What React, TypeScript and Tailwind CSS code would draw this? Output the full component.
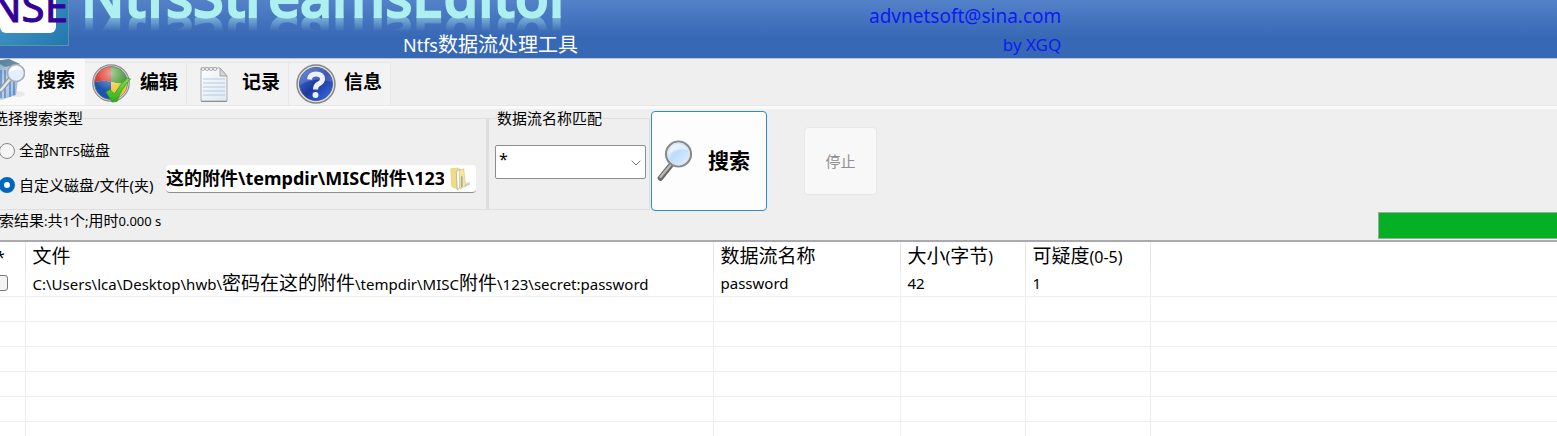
import { ChevronDown } from "lucide-react";
import type { ReactNode } from "react";

const CJK = /([\u4e00-\u9fff]+)/;

/** Sets Chinese runs one step larger than the Latin text around them. */
function Mixed({ text, cjk }: { text: string; cjk: string }) {
  return (
    <>
      {text.split(CJK).map((part, i) =>
        CJK.test(part) ? (
          <span key={i} className={cjk}>
            {part}
          </span>
        ) : (
          part
        ),
      )}
    </>
  );
}

function BinIcon() {
  return (
    <svg viewBox="0 0 40 44" className="h-11 w-10 shrink-0" aria-hidden="true">
      <defs>
        <linearGradient id="bin" x1="0" y1="0" x2="1" y2="1">
          <stop offset="0" stopColor="#5e8fa8" />
          <stop offset="0.5" stopColor="#b9d3e6" />
          <stop offset="1" stopColor="#6f9bd1" />
        </linearGradient>
      </defs>
      <ellipse cx="33" cy="36" rx="7" ry="3" fill="#e9e9e9" />
      <path d="M10 3 L24 1 L35 6 L31 37 L16 42 L12 38 Z" fill="url(#bin)" opacity="0.85" />
      <path d="M10 3 L24 1 L35 6 L20 9 Z" fill="#47708c" opacity="0.7" />
      <path d="M16 12v28M20 12v28M25 24v15M29 24v13" stroke="#4d78bd" strokeWidth="1.6" opacity="0.75" />
      <path d="M26 20 L16 32" stroke="#8d98a6" strokeWidth="5" strokeLinecap="round" />
      <path d="M26 20 L16 32" stroke="#e2e7ec" strokeWidth="2.5" strokeLinecap="round" />
      <circle cx="31" cy="15" r="8.5" fill="#e3effa" stroke="#a3abb4" strokeWidth="1.6" />
      <path d="M24 14a7 7 0 0 1 13-2c-4-1-8 0-13 2z" fill="#fff" />
    </svg>
  );
}

function ShieldIcon() {
  return (
    <svg viewBox="0 0 40 40" className="size-10 shrink-0" aria-hidden="true">
      <defs>
        <clipPath id="disc">
          <circle cx="19" cy="19" r="16.5" />
        </clipPath>
        <radialGradient id="shine" cx="0.5" cy="0.2" r="0.8">
          <stop offset="0" stopColor="#fff" stopOpacity="0.55" />
          <stop offset="0.7" stopColor="#fff" stopOpacity="0" />
        </radialGradient>
        <linearGradient id="tick" x1="0" y1="0" x2="0" y2="1">
          <stop offset="0" stopColor="#7ee04a" />
          <stop offset="1" stopColor="#2fae1e" />
        </linearGradient>
      </defs>
      <circle cx="19" cy="19" r="18.2" fill="#e4e4e4" stroke="#8b8b8b" strokeWidth="1.2" />
      <g clipPath="url(#disc)">
        <path d="M0 0H19V18Q10 15 0 19Z" fill="#df2a1b" />
        <path d="M19 0H40V19Q29 21 19 18Z" fill="#3c9428" />
        <path d="M0 19Q10 15 19 18V40H0Z" fill="#1c55ad" />
        <path d="M19 18Q29 21 40 19V40H19Z" fill="#f3c640" />
      </g>
      <circle cx="19" cy="19" r="16.5" fill="url(#shine)" stroke="#777" strokeWidth="0.8" />
      <path
        d="M14 28 L18 25.500 L22.500 30 Q28 20 35.500 14 L38.500 15 Q29 25 25 37.500 L20 38 Z"
        fill="url(#tick)"
        stroke="#3a9a24"
        strokeWidth="0.8"
      />
    </svg>
  );
}

function NotepadIcon() {
  return (
    <svg viewBox="0 0 40 40" className="size-10 shrink-0" aria-hidden="true">
      <defs>
        <linearGradient id="page" x1="0" y1="0" x2="1" y2="1">
          <stop offset="0" stopColor="#fdfdfd" />
          <stop offset="1" stopColor="#dfe8f0" />
        </linearGradient>
      </defs>
      <path d="M7 4H26L33 12V37H7Z" fill="url(#page)" stroke="#aab0b6" strokeWidth="1" />
      <path d="M26 4V12H33Z" fill="#d5d5d5" stroke="#999" strokeWidth="0.8" />
      <path d="M9 15H31M9 19H31M9 23H31M9 27H31M9 31H31" stroke="#b3cbe2" strokeWidth="1" />
      <path d="M7 37.500H33" stroke="#8b9096" strokeWidth="1" />
      {[9, 13, 17, 21].map((x) => (
        <circle key={x} cx={x} cy="5" r="1.6" fill="#f6f6f6" stroke="#9b9b9b" strokeWidth="0.8" />
      ))}
    </svg>
  );
}

function HelpIcon() {
  return (
    <svg viewBox="0 0 40 40" className="size-10 shrink-0" aria-hidden="true">
      <defs>
        <linearGradient id="orb" x1="0" y1="0" x2="1" y2="1">
          <stop offset="0" stopColor="#4a7be0" />
          <stop offset="0.5" stopColor="#1b3a9c" />
          <stop offset="1" stopColor="#3f6cf0" />
        </linearGradient>
      </defs>
      <circle cx="20" cy="20" r="19" fill="#dcdcdc" stroke="#858585" strokeWidth="1.4" />
      <circle cx="20" cy="20" r="16.5" fill="url(#orb)" stroke="#32508f" strokeWidth="0.8" />
      <path d="M4 21a16 16 0 0 1 32-3c-8-3-21-4-32 3z" fill="#fff" opacity="0.16" />
      <path
        d="M13.500 15.500Q14 10 20 10Q26.500 10 26.500 15Q26.500 18 22.500 20Q19.500 21.500 19.500 25.500"
        fill="none"
        stroke="#eef0f6"
        strokeWidth="5"
      />
      <circle cx="19.500" cy="31" r="3" fill="#eef0f6" />
    </svg>
  );
}

function MagnifierIcon() {
  return (
    <svg viewBox="0 0 40 44" className="h-11 w-10 shrink-0" aria-hidden="true">
      <defs>
        <linearGradient id="lens" x1="0" y1="0" x2="1" y2="1">
          <stop offset="0" stopColor="#f2f9ff" />
          <stop offset="0.45" stopColor="#bcdcfb" />
          <stop offset="1" stopColor="#e9f4ff" />
        </linearGradient>
      </defs>
      <path d="M15 26 L4.500 39" stroke="#6a6a6a" strokeWidth="5.500" strokeLinecap="round" />
      <path d="M14.500 26 L4.500 38" stroke="#b9b9b9" strokeWidth="2.200" strokeLinecap="round" />
      <circle cx="22.500" cy="15" r="12.500" fill="url(#lens)" stroke="#8a8a8a" strokeWidth="2.200" />
      <circle cx="22.500" cy="15" r="11" fill="none" stroke="#d9e4ee" strokeWidth="1" />
      <path d="M13 16Q18 9 32 11Q29 5 22 5Q13 6 13 16Z" fill="#fff" opacity="0.5" />
    </svg>
  );
}

function FolderIcon() {
  return (
    <svg viewBox="0 0 24 26" className="h-6 w-6 shrink-0" aria-hidden="true">
      <path d="M15 20L22 16L23 19L17 22Z" fill="#cfcfcf" />
      <path d="M2 2L10 1V24L3 21Z" fill="#f0dc86" stroke="#dcc267" strokeWidth="0.6" />
      <path d="M8 5L12 2V22L9 25Z" fill="#fff" stroke="#9a9a8e" strokeWidth="0.7" />
      <path d="M11 4L16 2L18 20L12 24Z" fill="#f6e79e" stroke="#d5bb59" strokeWidth="0.6" />
      <path d="M14 10V22" stroke="#7fa0b6" strokeWidth="1.400" />
    </svg>
  );
}

function Tab({ icon, label, selected = false }: { icon: ReactNode; label: string; selected?: boolean }) {
  return (
    <button
      type="button"
      role="tab"
      aria-selected={selected}
      className={
        selected
          ? "flex h-[46px] w-[100px] items-center bg-[#f9f9f9] pb-1 text-[19px] font-bold text-black"
          : "flex h-[43px] w-[102px] items-center gap-2 border border-b-0 border-l-0 border-[#e6e6e6] bg-[#f2f2f2] pl-[7px] text-[19px] font-bold text-black"
      }
    >
      {icon}
      <span className={selected ? "ml-3 whitespace-nowrap" : "pb-1 whitespace-nowrap"}>{label}</span>
    </button>
  );
}

const columns = ["文件", "数据流名称", "大小(字节)", "可疑度(0-5)"];
const rows = [
  ["C:\\Users\\lca\\Desktop\\hwb\\密码在这的附件\\tempdir\\MISC附件\\123\\secret:password", "password", "42", "1"],
];
const blankRows = [1, 2, 3, 4, 5, 6];

export default function App() {
  return (
    <div className="overflow-hidden bg-[#efefef] font-['Noto_Sans','Noto_Sans_CJK_SC',sans-serif] text-black">
      <header className="flex h-[59px] items-end overflow-hidden border-b border-[#b9c6dc] bg-linear-to-b from-[#5482c9] to-[#3768b5] to-65%">
        <div className="mb-3 -ml-3 flex h-20 w-[81px] shrink-0 items-end justify-end border-r border-b border-[#5c95a8] bg-linear-to-br from-[#54a8d2] to-[#2277ae] pb-3">
          <div className="mr-3 flex h-16 w-14 items-end justify-end rounded-md bg-white">
            <span className="-mr-3 text-[42px] leading-[54px] text-[#330099] [-webkit-text-stroke:1px_#330099]">NSE</span>
          </div>
        </div>
        <h1 className="mb-[31px] ml-3 w-[488px] shrink-0 text-[56px] leading-[64px] font-medium whitespace-nowrap text-[#aeeff0] [-webkit-box-reflect:below_-20px_linear-gradient(transparent_62%,rgba(255,255,255,0.5)_84%)] [-webkit-text-stroke:2px_#aeeff0]">
          NtfsStreamsEditor
        </h1>
        <p className="mb-px -ml-[166px] w-[174px] shrink-0 text-lg leading-6 whitespace-nowrap text-white">
          Ntfs<span className="text-xl leading-6">数据流处理工具</span>
        </p>
        <address className="ml-[292px] flex shrink-0 flex-col items-end text-[17px] leading-[27px] text-[#0a1cf5] not-italic">
          <a href="mailto:advnetsoft@sina.com" className="text-[19px] leading-[29px]">
            advnetsoft@sina.com
          </a>
          <span>by XGQ</span>
        </address>
      </header>

      <div role="tablist" className="-ml-[15px] flex items-end">
        <Tab icon={<BinIcon />} label="搜索" selected />
        <Tab icon={<ShieldIcon />} label="编辑" />
        <Tab icon={<NotepadIcon />} label="记录" />
        <Tab icon={<HelpIcon />} label="信息" />
      </div>
      <div className="h-1 border-t border-[#e8e8e8] bg-[#fafafa]" />

      <main>
        <form className="flex items-start" onSubmit={(e) => e.preventDefault()}>
          <fieldset className="-ml-2 h-[101px] w-[495px] shrink-0 border border-[#dedede]">
            <legend className="text-[15px] leading-[18px]">选择搜索类型</legend>
            <label className="mt-[13px] ml-1.5 flex items-center gap-1 text-[13px] leading-[20px]">
              <input type="radio" name="scope" className="size-4 shrink-0 appearance-none rounded-full border border-[#868686] bg-[#f6f6f6] checked:border-[5px] checked:border-[#0067c0]" />
              <span>
                <Mixed text="全部NTFS磁盘" cjk="text-[15px]" />
              </span>
            </label>
            <div className="mt-1 ml-1.5 flex items-start">
              <label className="mt-2.5 flex w-[155px] shrink-0 items-center gap-1 text-[15px] leading-5 whitespace-nowrap">
                <input type="radio" name="scope" defaultChecked className="size-4 shrink-0 appearance-none rounded-full border border-[#868686] bg-white checked:border-[5px] checked:border-[#0067c0]" />
                自定义磁盘/文件(夹)
              </label>
              <div className="ml-3 flex h-7 w-[310px] shrink-0 items-center rounded-sm border-b border-[#8f8f8f] bg-white pr-1">
                <input
                  type="text"
                  aria-label="文件夹路径"
                  defaultValue="这的附件\tempdir\MISC附件\123"
                  className="mr-1 h-6 w-full min-w-0 bg-transparent pb-1 text-right text-lg leading-5 font-bold outline-none"
                />
                <FolderIcon />
              </div>
            </div>
          </fieldset>

          <fieldset className="mr-px h-[101px] w-[163px] min-w-0 shrink-0 border border-l-2 border-[#dedede] px-1.5">
            <legend className="ml-0.5 text-[15px] leading-[18px]">数据流名称匹配</legend>
            <div className="relative mt-[18px] w-[151px]">
              <select
                aria-label="数据流名称匹配"
                className="h-[34px] w-full appearance-none rounded-xs border border-[#8d8d8d] bg-white pb-1.5 pl-[3px] text-base"
              >
                <option>*</option>
              </select>
              <ChevronDown className="pointer-events-none absolute top-2.5 right-0.5 size-4 text-[#777]" strokeWidth={1.5} />
            </div>
          </fieldset>

          <button
            type="submit"
            className="mt-0.5 flex h-[100px] w-[116px] shrink-0 items-center rounded-[4px] border border-[#2f8ad6] bg-[#fdfdfd] pl-1 text-xl font-bold"
          >
            <MagnifierIcon />
            <span className="ml-3 text-[21px]">搜索</span>
          </button>
          <button
            type="button"
            disabled
            className="mt-[18px] ml-[37px] h-[68px] w-[73px] shrink-0 rounded-[4px] border border-[#e8e8e8] bg-[#f8f8f8] text-[15px] text-[#8f8f8f]"
          >
            停止
          </button>
        </form>

        <div className="flex items-start justify-between">
          <p className="-ml-4 text-[13px] leading-[18px]">
            <Mixed text="搜索结果:共1个;用时0.000 s" cjk="text-[15px] leading-[18px]" />
          </p>
          <div
            role="progressbar"
            aria-label="搜索进度"
            aria-valuenow={100}
            className="mt-px mb-px h-[27px] w-[179px] border border-r-0 border-[#9fa8a0] bg-[#06b025]"
          />
        </div>

        <div className="border-t-2 border-[#a9a9ae] bg-white">
          <table className="w-full table-fixed border-collapse text-left">
            <colgroup>
              <col className="w-[25px]" />
              <col className="w-[688px]" />
              <col className="w-[187px]" />
              <col className="w-[125px]" />
              <col className="w-[125px]" />
              <col />
            </colgroup>
            <thead>
              <tr className="h-[29px] text-base">
                <th className="border-r border-[#e5e5e5] p-0 font-normal">
                  <span className="-ml-1">*</span>
                </th>
                {columns.map((name) => (
                  <th key={name} className="border-r border-[#e5e5e5] py-0 pr-0 pl-[7px] leading-6 font-normal whitespace-nowrap">
                    <Mixed text={name} cjk="text-[19px] leading-6" />
                  </th>
                ))}
                <th />
              </tr>
            </thead>
            <tbody>
              {rows.map((row) => (
                <tr key={row[0]} className="h-[25px] border-b border-[#efefef] text-[15px]">
                  <td className="border-r border-[#efefef] p-0">
                    <input
                      type="checkbox"
                      aria-label="选择"
                      className="-ml-2 block size-4 appearance-none rounded-[3px] border border-[#777] bg-[#f3f3f3]"
                    />
                  </td>
                  {row.map((cell) => (
                    <td key={cell} className="border-r border-[#efefef] py-0 pr-0 pl-[7px] leading-[22px] whitespace-nowrap">
                      <Mixed text={cell} cjk="text-[19px] leading-[22px]" />
                    </td>
                  ))}
                  <td />
                </tr>
              ))}
              {blankRows.map((n) => (
                <tr key={n} className="h-[25px] border-b border-[#efefef]">
                  <td className="border-r border-[#efefef]" />
                  <td className="border-r border-[#efefef]" />
                  <td className="border-r border-[#efefef]" />
                  <td className="border-r border-[#efefef]" />
                  <td className="border-r border-[#efefef]" />
                  <td />
                </tr>
              ))}
            </tbody>
          </table>
        </div>
      </main>
    </div>
  );
}
